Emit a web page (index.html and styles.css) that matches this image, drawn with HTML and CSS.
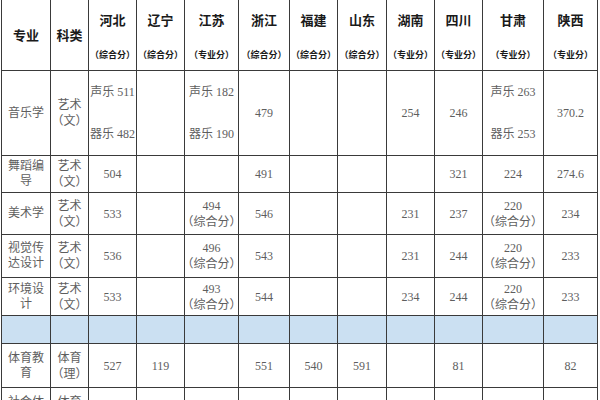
FILE: index.html
```html
<!DOCTYPE html>
<html lang="zh">
<head>
<meta charset="utf-8">
<title>分数线</title>
<link rel="stylesheet" href="styles.css">
</head>
<body>
<div class="table">
  <div class="cell head"><span class="ht">专业</span></div>
  <div class="cell head"><span class="ht">科类</span></div>
  <div class="cell head prov"><span class="ht">河北</span><span class="hs">（综合分）</span></div>
  <div class="cell head prov"><span class="ht">辽宁</span><span class="hs">（综合分）</span></div>
  <div class="cell head prov"><span class="ht">江苏</span><span class="hs">（专业分）</span></div>
  <div class="cell head prov"><span class="ht">浙江</span><span class="hs">（综合分）</span></div>
  <div class="cell head prov"><span class="ht">福建</span><span class="hs">（综合分）</span></div>
  <div class="cell head prov"><span class="ht">山东</span><span class="hs">（综合分）</span></div>
  <div class="cell head prov"><span class="ht">湖南</span><span class="hs">（专业分）</span></div>
  <div class="cell head prov"><span class="ht">四川</span><span class="hs">（专业分）</span></div>
  <div class="cell head prov"><span class="ht">甘肃</span><span class="hs">（专业分）</span></div>
  <div class="cell head prov"><span class="ht">陕西</span><span class="hs">（专业分）</span></div>

  <div class="cell major">音乐学</div>
  <div class="cell"><span>艺术</span><span>（文）</span></div>
  <div class="cell split"><span>声乐 511</span><span>器乐 482</span></div>
  <div class="cell"></div>
  <div class="cell split"><span>声乐 182</span><span>器乐 190</span></div>
  <div class="cell">479</div>
  <div class="cell"></div>
  <div class="cell"></div>
  <div class="cell">254</div>
  <div class="cell">246</div>
  <div class="cell split"><span>声乐 263</span><span>器乐 253</span></div>
  <div class="cell">370.2</div>

  <div class="cell major">舞蹈编导</div>
  <div class="cell"><span>艺术</span><span>（文）</span></div>
  <div class="cell">504</div>
  <div class="cell"></div>
  <div class="cell"></div>
  <div class="cell">491</div>
  <div class="cell"></div>
  <div class="cell"></div>
  <div class="cell"></div>
  <div class="cell">321</div>
  <div class="cell">224</div>
  <div class="cell">274.6</div>

  <div class="cell major">美术学</div>
  <div class="cell"><span>艺术</span><span>（文）</span></div>
  <div class="cell">533</div>
  <div class="cell"></div>
  <div class="cell"><span>494</span><span>（综合分）</span></div>
  <div class="cell">546</div>
  <div class="cell"></div>
  <div class="cell"></div>
  <div class="cell">231</div>
  <div class="cell">237</div>
  <div class="cell"><span>220</span><span>（综合分）</span></div>
  <div class="cell">234</div>

  <div class="cell major">视觉传达设计</div>
  <div class="cell"><span>艺术</span><span>（文）</span></div>
  <div class="cell">536</div>
  <div class="cell"></div>
  <div class="cell"><span>496</span><span>（综合分）</span></div>
  <div class="cell">543</div>
  <div class="cell"></div>
  <div class="cell"></div>
  <div class="cell">231</div>
  <div class="cell">244</div>
  <div class="cell"><span>220</span><span>（综合分）</span></div>
  <div class="cell">233</div>

  <div class="cell major">环境设计</div>
  <div class="cell"><span>艺术</span><span>（文）</span></div>
  <div class="cell">533</div>
  <div class="cell"></div>
  <div class="cell"><span>493</span><span>（综合分）</span></div>
  <div class="cell">544</div>
  <div class="cell"></div>
  <div class="cell"></div>
  <div class="cell">234</div>
  <div class="cell">244</div>
  <div class="cell"><span>220</span><span>（综合分）</span></div>
  <div class="cell">233</div>

  <div class="cell blue"></div>
  <div class="cell blue"></div>
  <div class="cell blue"></div>
  <div class="cell blue"></div>
  <div class="cell blue"></div>
  <div class="cell blue"></div>
  <div class="cell blue"></div>
  <div class="cell blue"></div>
  <div class="cell blue"></div>
  <div class="cell blue"></div>
  <div class="cell blue"></div>
  <div class="cell blue"></div>

  <div class="cell major">体育教育</div>
  <div class="cell"><span>体育</span><span>（理）</span></div>
  <div class="cell">527</div>
  <div class="cell">119</div>
  <div class="cell"></div>
  <div class="cell">551</div>
  <div class="cell">540</div>
  <div class="cell">591</div>
  <div class="cell"></div>
  <div class="cell">81</div>
  <div class="cell"></div>
  <div class="cell">82</div>

  <div class="cell major">社会体育</div>
  <div class="cell"><span>体育</span><span>（理）</span></div>
  <div class="cell"></div>
  <div class="cell"></div>
  <div class="cell"></div>
  <div class="cell"></div>
  <div class="cell"></div>
  <div class="cell"></div>
  <div class="cell"></div>
  <div class="cell"></div>
  <div class="cell"></div>
  <div class="cell"></div>
</div>
</body>
</html>
```

FILE: styles.css
```css
html, body {
  margin: 0;
  padding: 0;
  width: 600px;
  height: 400px;
  overflow: hidden;
  background: #ffffff;
}

.table {
  margin-left: 1px;
  display: grid;
  grid-template-columns: 49px 38px 48px 48px 54px 51px 48px 49px 48px 48px 61px 54px;
  grid-template-rows: 71px 85px 37px 42px 43px 38px 28px 44px 44px;
  border-left: 1px solid #3a3a3a;
  font-family: "Liberation Serif", "Noto Sans CJK SC", serif;
  font-size: 12px;
  line-height: 16px;
  color: #5e5e5e;
}

.cell {
  box-sizing: border-box;
  border-right: 1px solid #3a3a3a;
  border-bottom: 1px solid #3a3a3a;
  display: flex;
  flex-direction: column;
  align-items: center;
  justify-content: center;
  text-align: center;
  white-space: nowrap;
}

.major {
  white-space: normal;
  padding: 0 6px;
  line-height: 15px;
}

.split {
  gap: 26px;
}

.blue {
  background: #cbe0f2;
}

.head {
  font-family: "Noto Sans CJK SC", sans-serif;
  font-weight: bold;
  color: #1a1a1a;
}

.prov {
  justify-content: flex-start;
  padding-top: 12px;
}

.ht {
  font-size: 13px;
  line-height: 16px;
}

.hs {
  font-size: 9px;
  line-height: 16px;
  margin-top: 19px;
}
```
